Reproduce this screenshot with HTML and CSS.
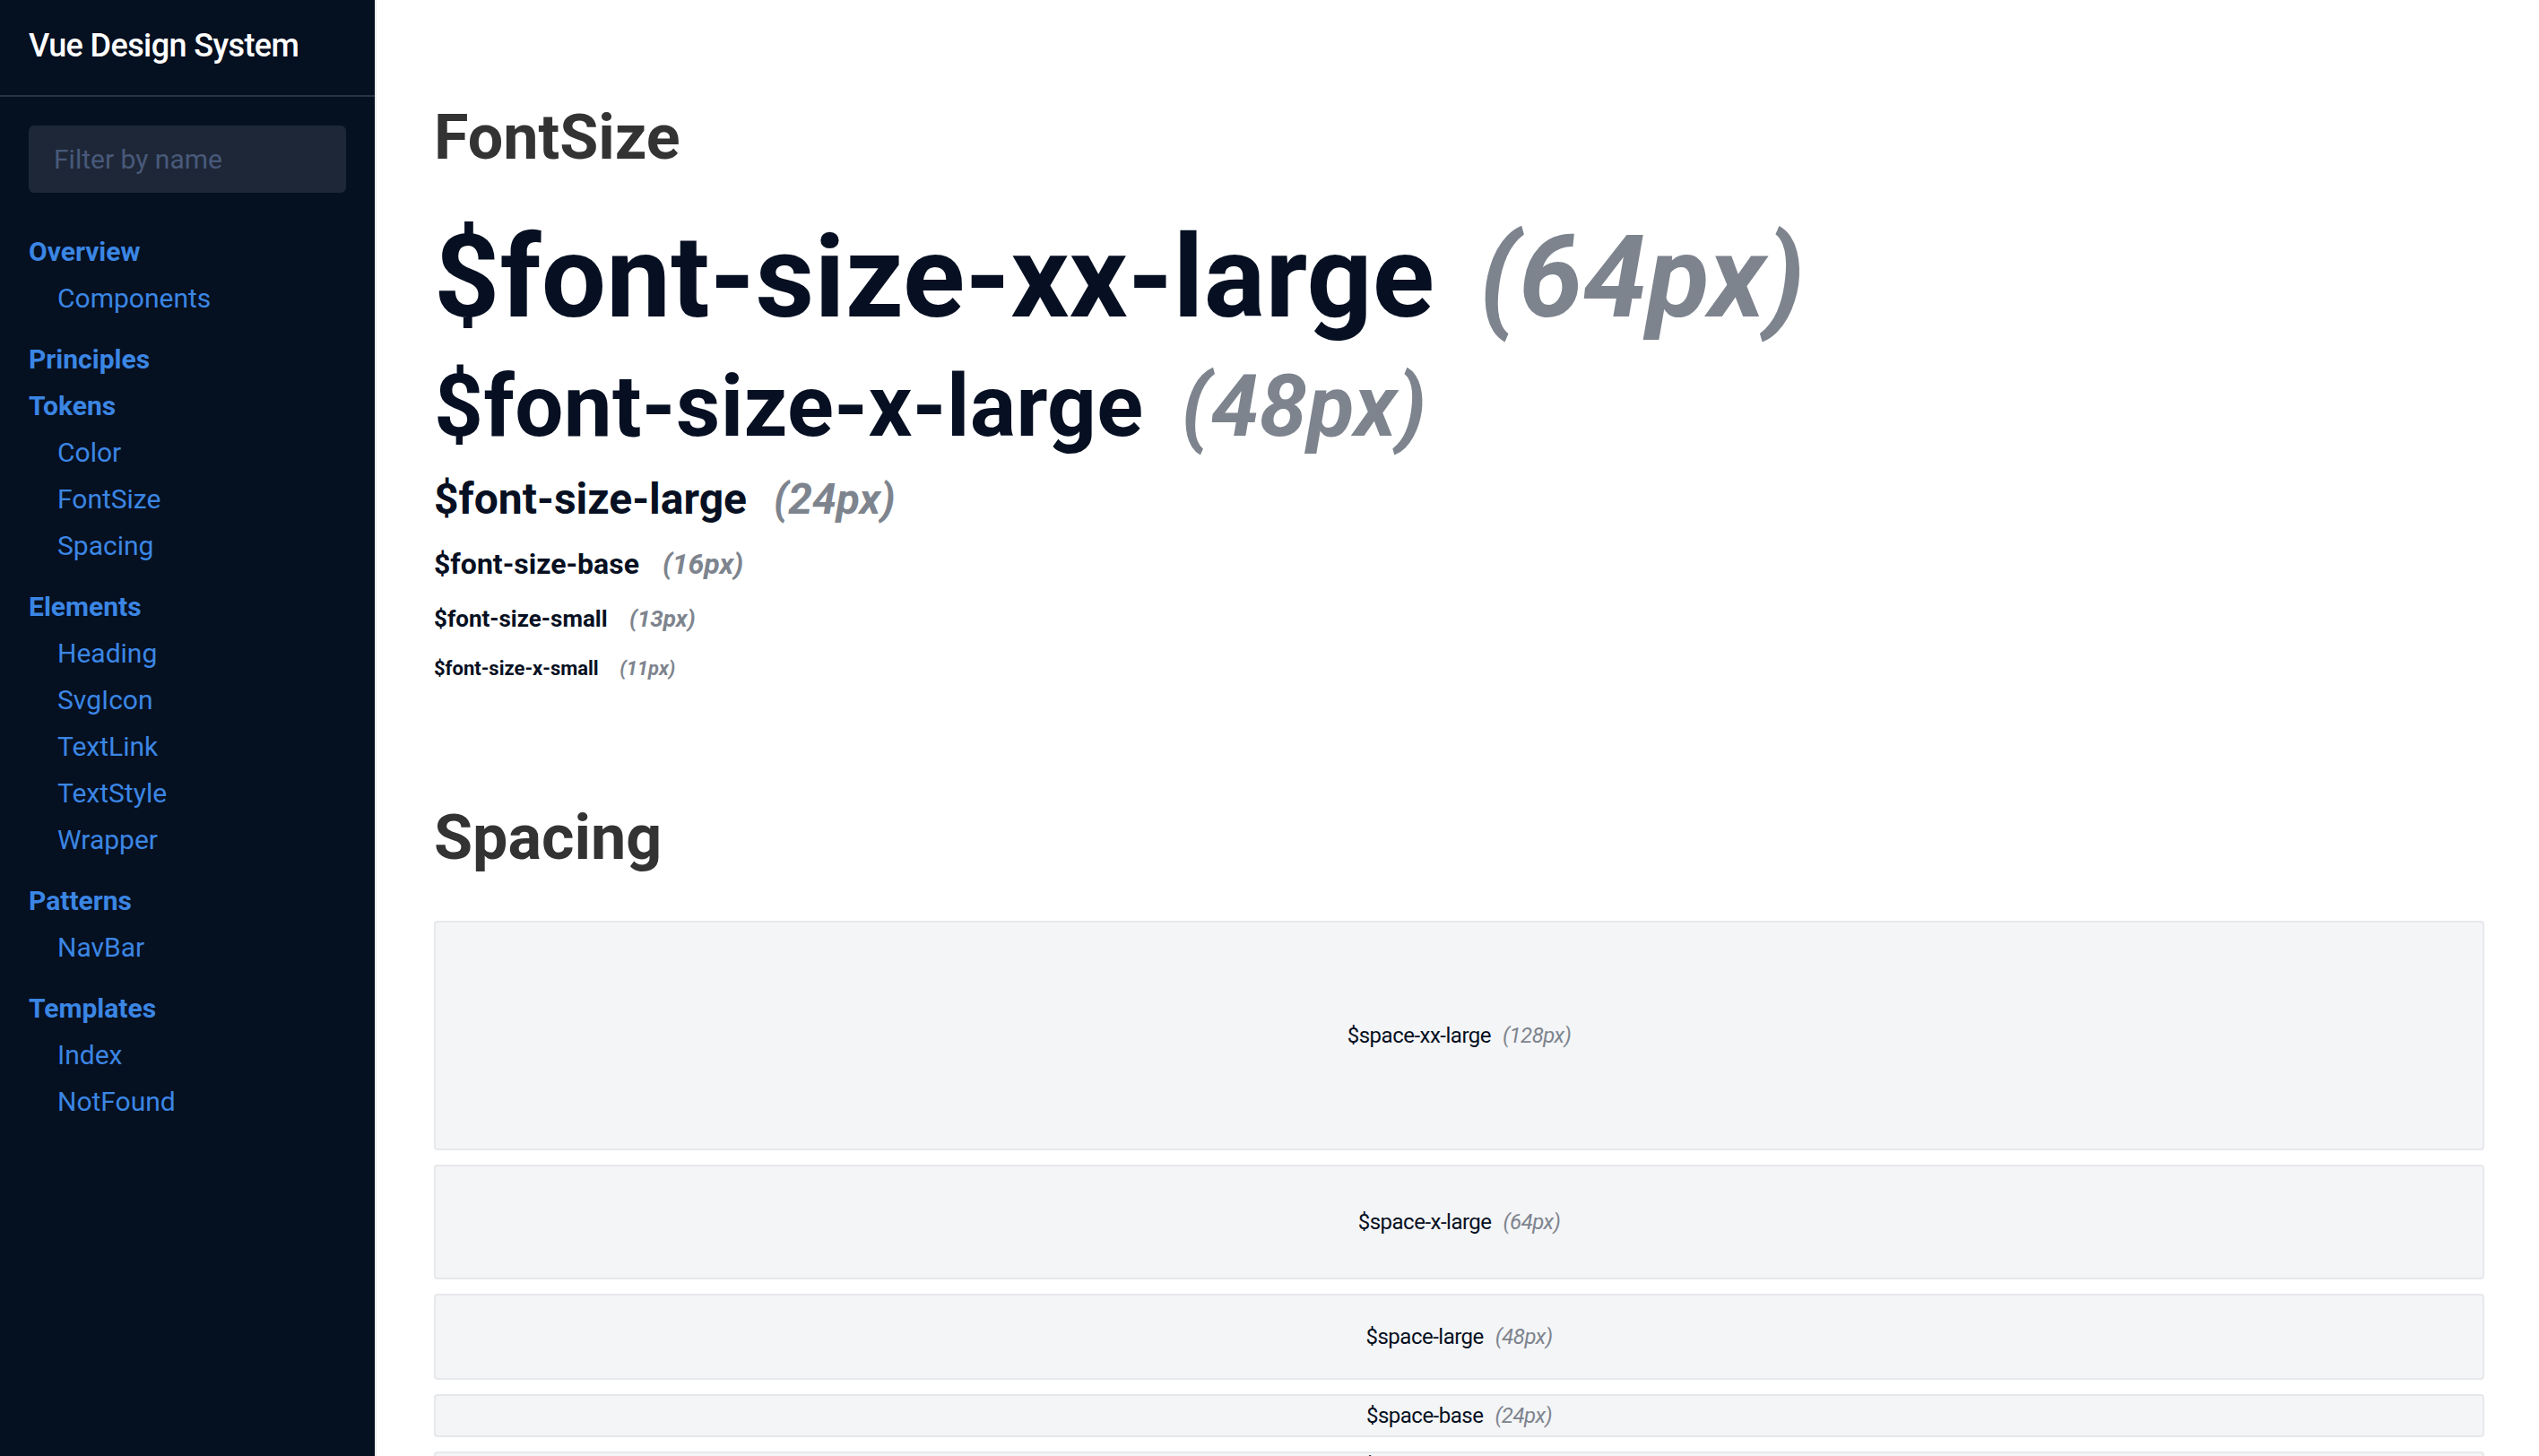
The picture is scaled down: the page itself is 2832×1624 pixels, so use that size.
FILE: index.html
```html
<!DOCTYPE html>
<html lang="en">
<head>
<meta charset="utf-8">
<title>Vue Design System</title>
<link rel="stylesheet" href="styles.css">
</head>
<body>
<div class="app">
  <aside class="sidebar">
    <header class="sidebar-header">Vue Design System</header>
    <div class="sidebar-body">
      <input class="filter" type="text" placeholder="Filter by name">
      <nav class="nav">
        <ul class="nav-list">
          <li class="nav-group">
            <a class="nav-title">Overview</a>
            <ul class="nav-sub">
              <li><a class="nav-link">Components</a></li>
            </ul>
          </li>
          <li class="nav-group"><a class="nav-title">Principles</a></li>
          <li class="nav-group">
            <a class="nav-title">Tokens</a>
            <ul class="nav-sub">
              <li><a class="nav-link">Color</a></li>
              <li><a class="nav-link">FontSize</a></li>
              <li><a class="nav-link">Spacing</a></li>
            </ul>
          </li>
          <li class="nav-group">
            <a class="nav-title">Elements</a>
            <ul class="nav-sub">
              <li><a class="nav-link">Heading</a></li>
              <li><a class="nav-link">SvgIcon</a></li>
              <li><a class="nav-link">TextLink</a></li>
              <li><a class="nav-link">TextStyle</a></li>
              <li><a class="nav-link">Wrapper</a></li>
            </ul>
          </li>
          <li class="nav-group">
            <a class="nav-title">Patterns</a>
            <ul class="nav-sub">
              <li><a class="nav-link">NavBar</a></li>
            </ul>
          </li>
          <li class="nav-group">
            <a class="nav-title">Templates</a>
            <ul class="nav-sub">
              <li><a class="nav-link">Index</a></li>
              <li><a class="nav-link">NotFound</a></li>
            </ul>
          </li>
        </ul>
      </nav>
    </div>
  </aside>

  <main class="main">
    <section class="token-section">
      <h2 class="section-title">FontSize</h2>
      <div class="font-list">
        <div class="font-row fs-xxl">$font-size-xx-large <span class="font-value">(64px)</span></div>
        <div class="font-row fs-xl">$font-size-x-large <span class="font-value">(48px)</span></div>
        <div class="font-row fs-l">$font-size-large <span class="font-value">(24px)</span></div>
        <div class="font-row fs-base">$font-size-base <span class="font-value">(16px)</span></div>
        <div class="font-row fs-s">$font-size-small <span class="font-value">(13px)</span></div>
        <div class="font-row fs-xs">$font-size-x-small <span class="font-value">(11px)</span></div>
      </div>
    </section>

    <section class="token-section spacing-section">
      <h2 class="section-title">Spacing</h2>
      <div class="space-list">
        <div class="space-box sp-xxl"><span class="space-name">$space-xx-large</span> <span class="space-value">(128px)</span></div>
        <div class="space-box sp-xl"><span class="space-name">$space-x-large</span> <span class="space-value">(64px)</span></div>
        <div class="space-box sp-l"><span class="space-name">$space-large</span> <span class="space-value">(48px)</span></div>
        <div class="space-box sp-base"><span class="space-name">$space-base</span> <span class="space-value">(24px)</span></div>
        <div class="space-box sp-s"><span class="space-name">$space-small</span> <span class="space-value">(16px)</span></div>
        <div class="space-box sp-xs"><span class="space-name">$space-x-small</span> <span class="space-value">(8px)</span></div>
        <div class="space-box sp-xxs"><span class="space-name">$space-xx-small</span> <span class="space-value">(4px)</span></div>
      </div>
    </section>
  </main>
</div>
</body>
</html>
```
FILE: styles.css
```css
html, body {
  margin: 0;
  padding: 0;
  height: 100%;
  overflow: hidden;
  background: #ffffff;
}

body {
  font-family: Roboto, "Noto Sans", "Liberation Sans", sans-serif;
  -webkit-font-smoothing: antialiased;
}

.app {
  display: flex;
  height: 100vh;
}

/* ---------- Sidebar ---------- */
.sidebar {
  flex: 0 0 418px;
  width: 418px;
  background: #051021;
  border-right: 2px solid #e9eaec;
  display: flex;
  flex-direction: column;
}

.sidebar-header {
  height: 62px;
  padding: 20px 32px 24px;
  line-height: 62px;
  font-size: 36px;
  font-weight: 500;
  letter-spacing: -0.6px;
  color: #ffffff;
  border-bottom: 2px solid #2b3340;
  white-space: nowrap;
}

.sidebar-body {
  padding: 32px 32px 0;
}

.filter {
  display: block;
  box-sizing: border-box;
  width: 354px;
  height: 75px;
  margin: 0;
  padding: 0 28px;
  border: 0;
  border-radius: 6px;
  background: #1e2737;
  font-family: inherit;
  font-size: 30px;
  color: #c8d0dc;
  outline: none;
}

.filter::placeholder {
  color: #48597a;
}

.nav {
  margin-top: 40px;
}

.nav-list,
.nav-sub {
  list-style: none;
  margin: 0;
  padding: 0;
}

.nav-title,
.nav-link {
  display: block;
  line-height: 52px;
  font-size: 30px;
  color: #3b86e4;
  text-decoration: none;
  white-space: nowrap;
}

.nav-title {
  font-weight: 700;
}

.nav-sub {
  padding-left: 32px;
  margin-bottom: 16px;
}

/* ---------- Main ---------- */
.main {
  flex: 1 1 auto;
  min-width: 0;
  padding: 111px 61px 0 64px;
  overflow: hidden;
}

.section-title {
  margin: 0 0 50px;
  font-size: 70px;
  line-height: 84px;
  font-weight: 700;
  color: #333333;
}

.spacing-section {
  margin-top: 135px;
}

.spacing-section .section-title {
  margin-bottom: 51px;
}

.font-list {
  display: flex;
  flex-direction: column;
  gap: 32px;
}

.font-row {
  line-height: 1;
  font-weight: 700;
  color: #071022;
  white-space: nowrap;
}

.font-value {
  margin-left: 18px;
  font-style: italic;
  color: #7e848e;
}

.fs-xxl { font-size: 128px; letter-spacing: 0.002em; }
.fs-xl { font-size: 96px; letter-spacing: 0.004em; }
.fs-l { font-size: 48px; }
.fs-base { font-size: 32px; }
.fs-s { font-size: 26px; }
.fs-xs { font-size: 22px; }

.space-list {
  display: flex;
  flex-direction: column;
  gap: 16px;
}

.space-box {
  box-sizing: border-box;
  display: flex;
  align-items: center;
  justify-content: center;
  flex: 0 0 auto;
  background: #f4f5f7;
  border: 2px solid #e6e8eb;
  border-radius: 4px;
  font-size: 24px;
  line-height: 28px;
  letter-spacing: -0.5px;
  white-space: pre;
  overflow: visible;
}

.space-name {
  color: #071022;
}

.space-value {
  margin-left: 13px;
  font-style: italic;
  color: #7e848e;
}

.sp-xxl { height: 256px; }
.sp-xl { height: 128px; }
.sp-l { height: 96px; }
.sp-base { height: 48px; }
.sp-s { height: 32px; }
.sp-xs { height: 16px; }
.sp-xxs { height: 8px; }
```
